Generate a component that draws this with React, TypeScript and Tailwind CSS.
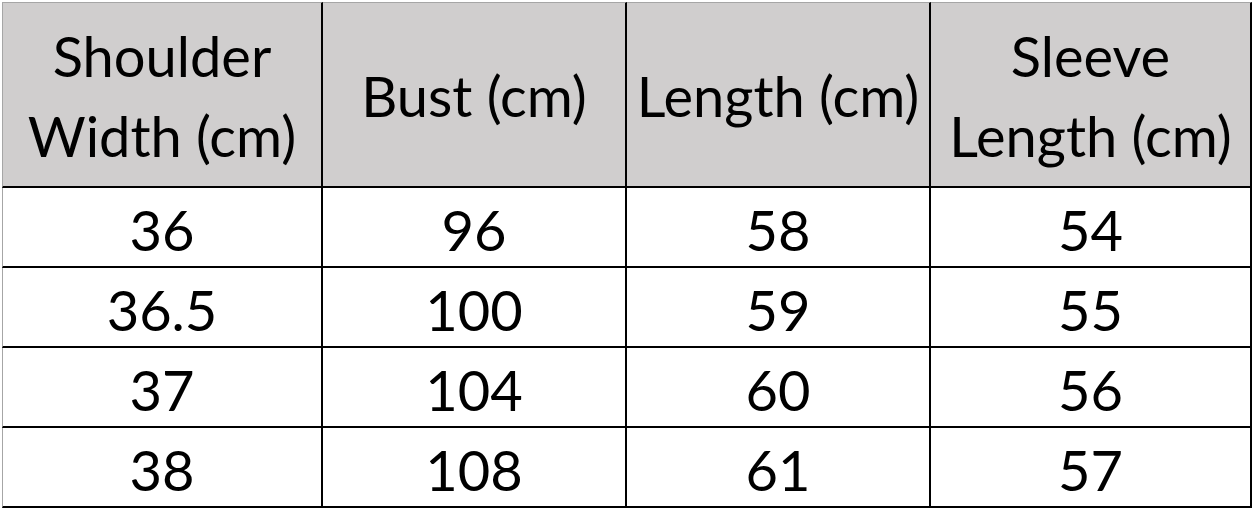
const headers = [
  ["Shoulder", "Width (cm)"],
  ["Bust (cm)"],
  ["Length (cm)"],
  ["Sleeve", "Length (cm)"],
];

const rows = [
  ["36", "96", "58", "54"],
  ["36.5", "100", "59", "55"],
  ["37", "104", "60", "56"],
  ["38", "108", "61", "57"],
];

const widths = ["w-[321px]", "w-[304px]", "w-[304px]", "w-[321px]"];

export default function App() {
  return (
    <div
      className="w-[1252px] h-[508px] bg-white pt-[2px] pl-[2px] overflow-hidden text-black"
      style={{ fontFamily: "Lato, 'Liberation Sans', sans-serif" }}
    >
      {/* header */}
      <div className="flex">
        {headers.map((h, i) => (
          <div
            key={i}
            className={`${widths[i]} h-[186px] shrink-0 bg-[#d0cece] border-t border-t-[#a6a6a6] border-b-2 border-b-black border-r-2 border-r-black ${
              i === 0 ? "border-l border-l-[#a6a6a6]" : ""
            } flex flex-col items-center justify-center text-[56px] leading-[80px] pt-[2px]`}
          >
            {h.map((line) => (
              <span key={line}>{line}</span>
            ))}
          </div>
        ))}
      </div>

      {/* data rows */}
      {rows.map((r, ri) => (
        <div key={ri} className="flex">
          {r.map((v, ci) => (
            <div
              key={ci}
              className={`${widths[ci]} h-[80px] shrink-0 border-b-2 border-b-black border-r-2 border-r-black ${
                ci === 0 ? "border-l border-l-[#a6a6a6]" : ""
              } flex items-center justify-center text-[56px] pt-[6px]`}
            >
              {v}
            </div>
          ))}
        </div>
      ))}
    </div>
  );
}
